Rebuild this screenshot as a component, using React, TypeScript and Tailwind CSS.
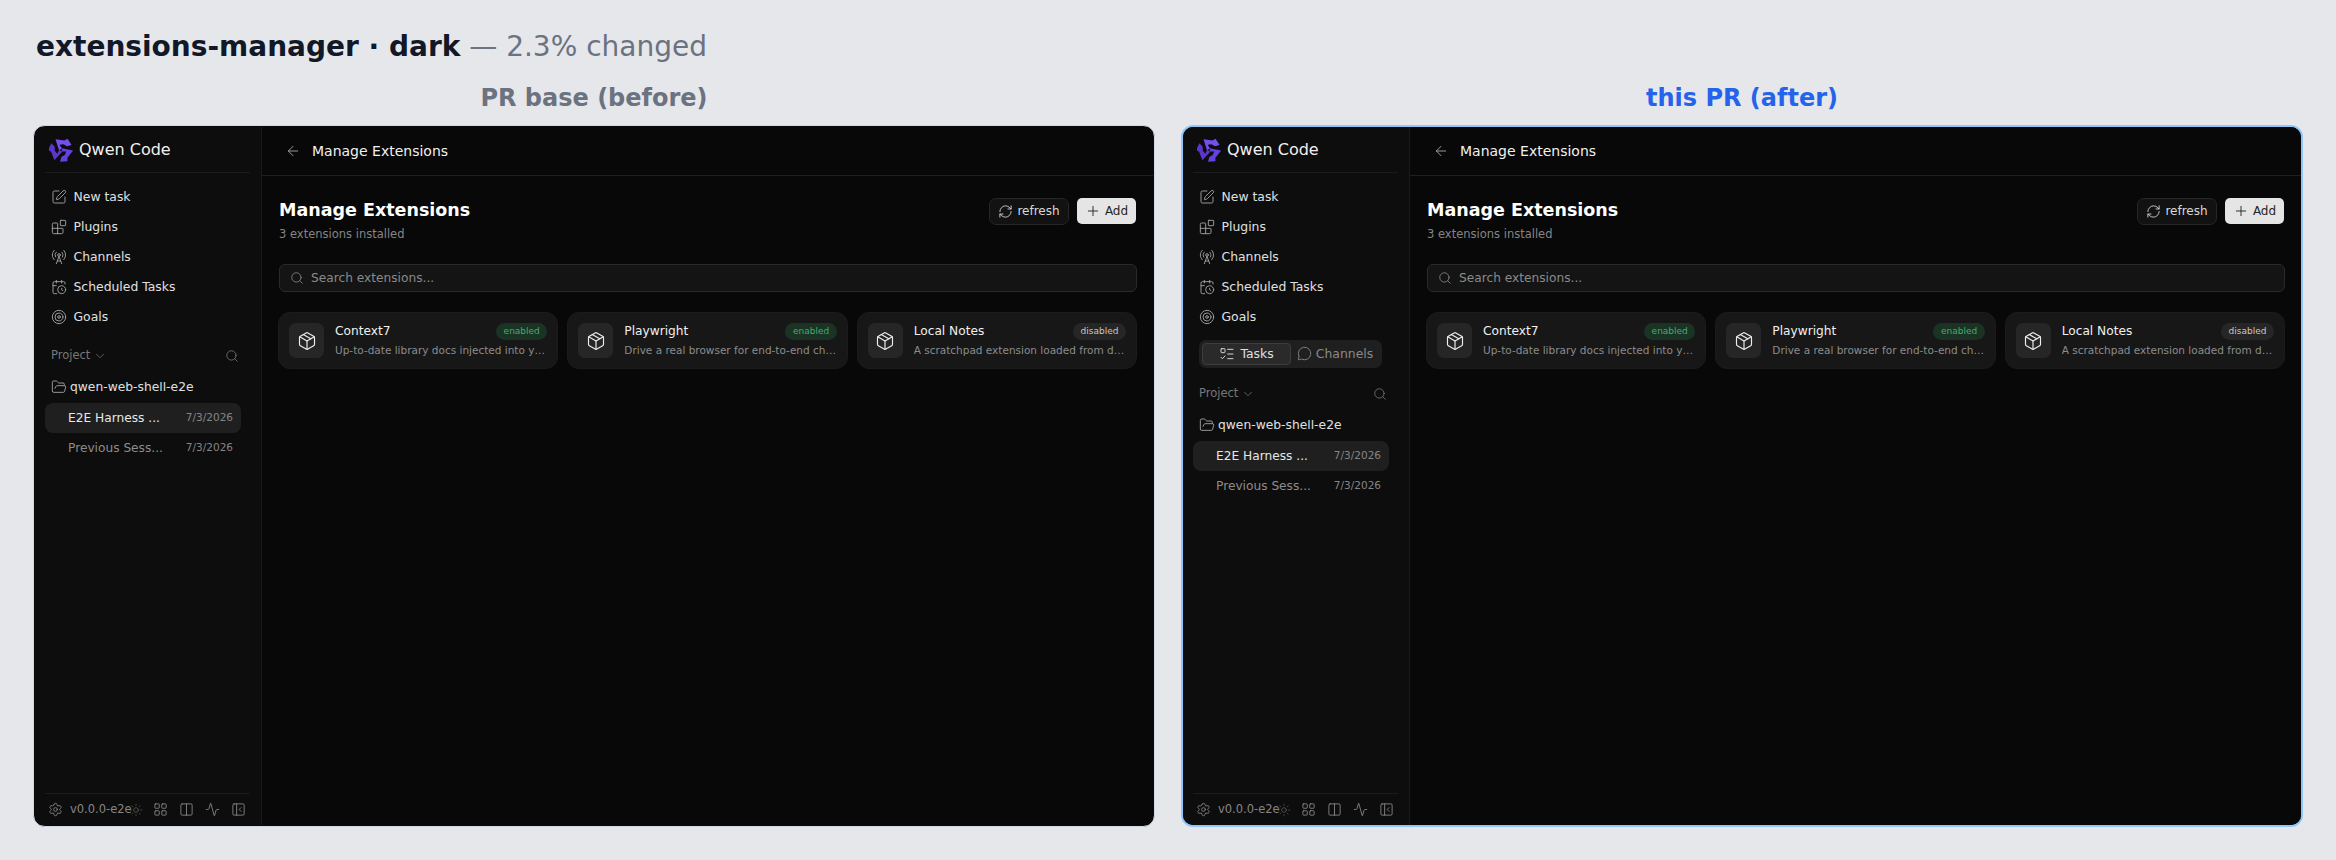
import React from "react";
import {
  SquarePen, Blocks, RadioTower, CalendarClock, Target, ChevronDown, Search, FolderOpen, Settings, Sun,
  LayoutGrid, Columns2, Activity, PanelLeftClose, ListTodo, MessageCircle, ArrowLeft, RefreshCw, Plus, Package,
} from "lucide-react";

const ARM = "M6.5 1.2 L15.5 2.6 L18.5 0.8 L22.6 7 L18 8.2 L14.5 6.2 L10.6 6.8 L13 10.6 L10 12.2 Z";

const Logo = () => (
  <svg width="24" height="24" viewBox="0 0 24 24" className="shrink-0">
    <path d={ARM} fill="#7350ee" />
    <path d={ARM} fill="#6540e0" transform="rotate(120 12 12)" />
    <path d={ARM} fill="#5c34cf" transform="rotate(240 12 12)" />
  </svg>
);

const NAV = [
  [SquarePen, "New task"],
  [Blocks, "Plugins"],
  [RadioTower, "Channels"],
  [CalendarClock, "Scheduled Tasks"],
  [Target, "Goals"],
] as const;

const CARDS = [
  { name: "Context7", desc: "Up-to-date library docs injected into your prompts", on: true },
  { name: "Playwright", desc: "Drive a real browser for end-to-end checks and flows", on: true },
  { name: "Local Notes", desc: "A scratchpad extension loaded from disk for notes", on: false },
];

function Sidebar({ tabs }: { tabs: boolean }) {
  return (
    <aside className="w-[227px] shrink-0 flex flex-col bg-[#0d0d0d] border-r border-[#1a1a1a]">
      <div className="ml-[10px] mr-[11px] h-[46px] pl-[4px] flex items-center gap-[6px] border-b border-[#1c1c1c] shrink-0">
        <Logo />
        <span className="text-[16px] text-[#f0f0f0]">Qwen Code</span>
      </div>
      <nav className="pt-[9px] pl-[16px] flex flex-col">
        {NAV.map(([I, label]) => (
          <div key={label} className="h-[30px] flex items-center gap-[6.5px] text-[12.4px] text-[#e0e0e0]">
            <I size={16} strokeWidth={1.4} className="text-[#a3a3a3] shrink-0" />
            <span>{label}</span>
          </div>
        ))}
      </nav>
      {tabs && (
        <div className="mt-[8px] ml-[16px] w-[183px] h-[28px] rounded-[7px] bg-[#1f1f1f] flex items-center p-[3px] text-[12.4px]">
          <div className="w-[89px] h-[22px] rounded-[4px] bg-[#2a2a2a] border border-[#3d3d3d] flex items-center justify-center gap-[5px] text-[#e0e0e0]">
            <ListTodo size={16} strokeWidth={1.4} />
            <span>Tasks</span>
          </div>
          <div className="flex-1 flex items-center justify-center gap-[4px] text-[#8a8a8a]">
            <MessageCircle size={15} strokeWidth={1.4} />
            <span>Channels</span>
          </div>
        </div>
      )}
      <div className={`${tabs ? "mt-[16px]" : "mt-[14px]"} pl-[16px] pr-[22px] h-[20px] flex items-center justify-between text-[11.5px] text-[#787878]`}>
        <span className="flex items-center gap-[3px]">
          Project <ChevronDown size={14} strokeWidth={1.25} />
        </span>
        <Search size={14} strokeWidth={1.4} />
      </div>
      <div className="mt-[11px] pl-[16px] h-[20px] flex items-center gap-[3px] text-[12.3px] text-[#e0e0e0]">
        <FolderOpen size={16} strokeWidth={1.4} className="text-[#a3a3a3] shrink-0" />
        <span>qwen-web-shell-e2e</span>
      </div>
      <div className="mt-[6px] ml-[10px] mr-[20px] flex flex-col">
        <div className="h-[30px] rounded-[8px] bg-[#1f1f1f] pl-[23px] pr-[8px] flex items-center justify-between">
          <span className="text-[12.2px] text-[#e8e8e8]">E2E Harness ...</span>
          <span className="text-[10.5px] text-[#858585]">7/3/2026</span>
        </div>
        <div className="h-[30px] pl-[23px] pr-[8px] flex items-center justify-between">
          <span className="text-[12.2px] text-[#8c8c8c]">Previous Sess...</span>
          <span className="text-[10.5px] text-[#858585]">7/3/2026</span>
        </div>
      </div>
      <div className="mt-auto ml-[10px] mr-[11px] h-[32px] border-t border-[#1c1c1c] flex items-center text-[#8a8a8a] shrink-0">
        <Settings size={15} strokeWidth={1.4} className="ml-[3px] shrink-0" />
        <span className="ml-[7px] text-[11.5px] text-[#858585] whitespace-nowrap">v0.0.0-e2e</span>
        <Sun size={14} strokeWidth={1.1} className="ml-[-3px] text-[#6b6b6b] shrink-0" />
        <LayoutGrid size={15} strokeWidth={1.4} className="ml-[10px] shrink-0" />
        <Columns2 size={15} strokeWidth={1.4} className="ml-[11px] shrink-0" />
        <Activity size={15} strokeWidth={1.4} className="ml-[11px] shrink-0" />
        <PanelLeftClose size={15} strokeWidth={1.4} className="ml-[11px] shrink-0" />
      </div>
    </aside>
  );
}

function Card({ name, desc, on }: { name: string; desc: string; on: boolean }) {
  return (
    <div className="min-w-0 h-[57px] rounded-[12px] bg-[#171717] border border-[#1b1b1b] px-[10px] flex items-center gap-[11px]">
      <div className="w-[35px] h-[35px] shrink-0 rounded-[7px] bg-[#262626] flex items-center justify-center">
        <Package size={20} strokeWidth={1.4} className="text-[#ededed]" />
      </div>
      <div className="min-w-0 flex-1">
        <div className="flex items-center justify-between h-[17px]">
          <span className="text-[12.2px] text-[#f0f0f0]">{name}</span>
          <span className={`h-[17px] px-[7.5px] flex items-center rounded-full text-[9px] ${on ? "bg-[#1a3324] text-[#43b069]" : "bg-[#262626] text-[#c9c9c9]"}`}>
            {on ? "enabled" : "disabled"}
          </span>
        </div>
        <div className="mt-[3px] text-[10.5px] leading-[15px] text-[#8c8c8c] truncate">{desc}</div>
      </div>
    </div>
  );
}

function Main() {
  return (
    <main className="flex-1 min-w-0 flex flex-col bg-[#080808]">
      <div className="h-[49px] shrink-0 pl-[23px] flex items-center gap-[11px] border-b border-[#1f1f1f]">
        <ArrowLeft size={16} strokeWidth={1.4} className="text-[#a3a3a3]" />
        <span className="text-[14px] text-[#f0f0f0]">Manage Extensions</span>
      </div>
      <div className="pl-[17px] pr-[16px] pt-[23px]">
        <div className="flex items-start justify-between">
          <div>
            <h2 className="text-[17.5px] leading-[22px] font-bold text-white">Manage Extensions</h2>
            <p className="mt-[6px] text-[11.5px] leading-[14px] text-[#858585]">3 extensions installed</p>
          </div>
          <div className="flex items-center gap-[8px] mr-[1px] mt-[-1.5px]">
            <button className="h-[27px] w-[80px] rounded-[7px] bg-[#121212] border border-[#262626] flex items-center justify-center gap-[4px] text-[12px] text-[#d9d9d9]">
              <RefreshCw size={15} strokeWidth={1.4} />
              refresh
            </button>
            <button className="h-[26px] w-[59px] rounded-[5px] bg-[#e5e5e5] flex items-center justify-center gap-[4px] text-[12px] text-[#262626]">
              <Plus size={16} strokeWidth={1.4} />
              Add
            </button>
          </div>
        </div>
        <div className="mt-[23px] h-[28px] rounded-[6px] bg-[#141414] border border-[#2a2a2a] pl-[10px] flex items-center gap-[7px] text-[12.2px] text-[#8a8a8a]">
          <Search size={14} strokeWidth={1.4} />
          <span>Search extensions...</span>
        </div>
        <div className="mt-[20px] ml-[-1px] grid grid-cols-3 gap-[9px]">
          {CARDS.map((c) => (
            <Card key={c.name} {...c} />
          ))}
        </div>
      </div>
    </main>
  );
}

function Panel({ after }: { after: boolean }) {
  return (
    <section className="min-w-0">
      <h3 className={`mt-[1px] text-center text-[24px] leading-[32px] font-bold ${after ? "text-[#2563eb]" : "text-[#6b7280]"}`}>
        {after ? "this PR (after)" : "PR base (before)"}
      </h3>
      <div className={`mt-[11px] h-[702px] rounded-[12px] overflow-hidden flex bg-[#0b0b0b] ${after ? "border-2 border-[#93c5fd]" : "border border-[#d1d9e6] p-[1px]"}`}>
        <Sidebar tabs={after} />
        <Main />
      </div>
    </section>
  );
}

export default function App() {
  return (
    <div className="w-[2336px] h-[860px] overflow-hidden bg-[#e5e7eb] px-[33px] pt-[27px] font-['DejaVu_Sans',sans-serif]">
      <h1 className="pl-[3px] text-[28px] leading-[40px] text-[#6b7280]">
        <span className="font-bold text-[#111827]">extensions-manager · dark</span> — 2.3% changed
      </h1>
      <div className="mt-[14px] grid grid-cols-2 gap-[26px]">
        <Panel after={false} />
        <Panel after />
      </div>
    </div>
  );
}
